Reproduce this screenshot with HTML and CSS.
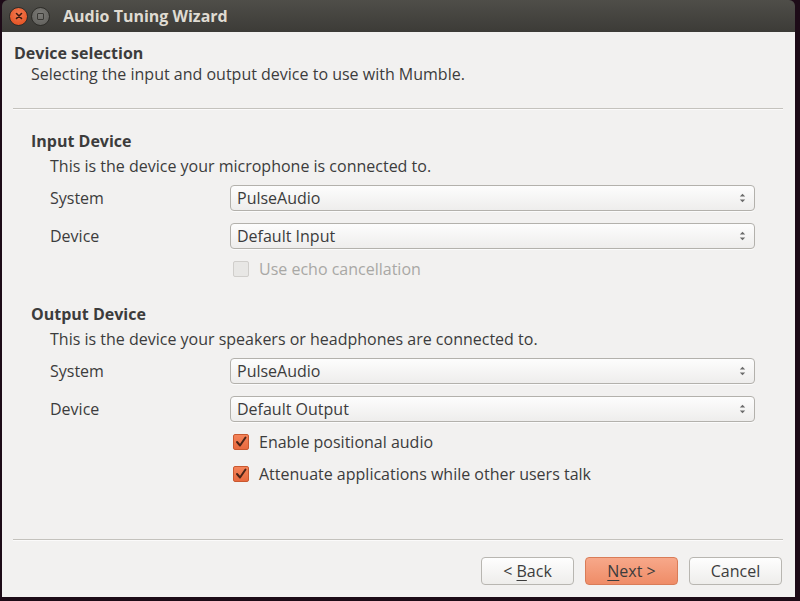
FILE: index.html
```html
<!DOCTYPE html>
<html>
<head>
<meta charset="utf-8">
<link rel="stylesheet" href="styles.css">
</head>
<body>
<div class="window">
  <div class="titlebar">
    <span class="btn-close"><svg width="10" height="10" viewBox="0 0 10 10"><path d="M2.5 2.5 L7.5 7.5 M7.5 2.5 L2.5 7.5" stroke="#3a1a10" stroke-width="1.6" stroke-linecap="round"/></svg></span>
    <span class="btn-min"><span class="min-sq"></span></span>
    <span class="title">Audio Tuning Wizard</span>
  </div>
  <div class="content">
    <div class="page-head">
      <div class="page-title">Device selection</div>
      <div class="page-sub">Selecting the input and output device to use with Mumble.</div>
    </div>
    <div class="sep"></div>

    <div class="group">
      <div class="group-title">Input Device</div>
      <div class="group-desc">This is the device your microphone is connected to.</div>
      <div class="form form-in">
        <div class="label">System</div>
        <div class="combo"><span>PulseAudio</span><span class="arrows"><svg width="7" height="12" viewBox="0 0 7 12"><path d="M0.8 4.5 L3.5 1.8 L6.2 4.5 Z M0.8 7.5 L3.5 10.2 L6.2 7.5 Z" fill="#6a6a6a"/></svg></span></div>
        <div class="label">Device</div>
        <div class="combo"><span>Default Input</span><span class="arrows"><svg width="7" height="12" viewBox="0 0 7 12"><path d="M0.8 4.5 L3.5 1.8 L6.2 4.5 Z M0.8 7.5 L3.5 10.2 L6.2 7.5 Z" fill="#6a6a6a"/></svg></span></div>
        <div class="label"></div>
        <div class="check disabled first"><span class="box"></span><span>Use echo cancellation</span></div>
      </div>
    </div>

    <div class="group group2">
      <div class="group-title">Output Device</div>
      <div class="group-desc">This is the device your speakers or headphones are connected to.</div>
      <div class="form form-out">
        <div class="label">System</div>
        <div class="combo"><span>PulseAudio</span><span class="arrows"><svg width="7" height="12" viewBox="0 0 7 12"><path d="M0.8 4.5 L3.5 1.8 L6.2 4.5 Z M0.8 7.5 L3.5 10.2 L6.2 7.5 Z" fill="#6a6a6a"/></svg></span></div>
        <div class="label">Device</div>
        <div class="combo"><span>Default Output</span><span class="arrows"><svg width="7" height="12" viewBox="0 0 7 12"><path d="M0.8 4.5 L3.5 1.8 L6.2 4.5 Z M0.8 7.5 L3.5 10.2 L6.2 7.5 Z" fill="#6a6a6a"/></svg></span></div>
        <div class="label"></div>
        <div class="check first"><span class="box checked"><svg width="14" height="14" viewBox="0 0 14 14"><path d="M3 7 L6 10.5 L11.5 2.5" stroke="#4a2418" stroke-width="2" fill="none" stroke-linecap="round" stroke-linejoin="round"/></svg></span><span>Enable positional audio</span></div>
        <div class="label"></div>
        <div class="check"><span class="box checked"><svg width="14" height="14" viewBox="0 0 14 14"><path d="M3 7 L6 10.5 L11.5 2.5" stroke="#4a2418" stroke-width="2" fill="none" stroke-linecap="round" stroke-linejoin="round"/></svg></span><span>Attenuate applications while other users talk</span></div>
      </div>
    </div>

    <div class="spacer"></div>
    <div class="sep"></div>
    <div class="buttons">
      <button class="btn">&lt; <u>B</u>ack</button>
      <button class="btn primary"><u>N</u>ext &gt;</button>
      <button class="btn">Cancel</button>
    </div>
  </div>
</div>
</body>
</html>
```

FILE: styles.css
```css
html, body {
  margin: 0;
  padding: 0;
  height: 601px;
  overflow: hidden;
}
body {
  background: #1d0b17;
  font-family: "Open Sans", "DejaVu Sans", sans-serif;
  font-size: 16px;
  color: #3c3c3c;
}
.window {
  margin-left: 2px;
  width: 793px;
  height: 597px;
  display: flex;
  flex-direction: column;
}
.titlebar {
  height: 32px;
  flex: none;
  background: linear-gradient(#4f4e49, #3c3b37);
  border-radius: 6px 6px 0 0;
  display: flex;
  align-items: center;
  padding-left: 7px;
  box-sizing: border-box;
}
.btn-close {
  width: 19px;
  height: 19px;
  border-radius: 50%;
  background: radial-gradient(circle at 50% 35%, #f47a50, #df4a1a);
  border: 1px solid #2d2c28;
  display: flex;
  align-items: center;
  justify-content: center;
  box-sizing: border-box;
}
.btn-min {
  width: 19px;
  height: 19px;
  border-radius: 50%;
  background: radial-gradient(circle at 50% 35%, #7c7b77, #5d5c58);
  border: 1px solid #2d2c28;
  margin-left: 3px;
  display: flex;
  align-items: center;
  justify-content: center;
  box-sizing: border-box;
}
.min-sq {
  width: 7px;
  height: 7px;
  border: 1.5px solid #3a3935;
  border-radius: 1px;
  box-sizing: border-box;
}
.title {
  margin-left: 13px;
  color: #dfdbd2;
  font-weight: bold;
  font-size: 16px;
}
.content {
  flex: 1;
  background: #f2f1f0;
  display: flex;
  flex-direction: column;
  padding: 0 12px 0 11px;
}
.page-head {
  padding-top: 11px;
  height: 76px;
  box-sizing: border-box;
}
.page-title {
  font-weight: bold;
  line-height: 20px;
  padding-left: 1px;
}
.page-sub {
  padding-left: 18px;
  line-height: 22px;
}
.sep {
  height: 1px;
  background: #c4c2bd;
  border-bottom: 1px solid #fbfafa;
  flex: none;
}
.group {
  padding-left: 18px;
  padding-top: 20px;
}
.group2 {
  padding-top: 24px;
}
.group-title {
  font-weight: bold;
  line-height: 22px;
}
.group-desc {
  padding-left: 19px;
  line-height: 22px;
  margin-top: 3px;
}
.form {
  display: grid;
  grid-template-columns: 180px 525px;
  row-gap: 12px;
  padding-left: 19px;
  margin-top: 8px;
  align-items: center;
}
.form-out {
  margin-top: 8px;
}
.label {
  line-height: 26px;
}
.combo {
  height: 26px;
  box-sizing: border-box;
  border: 1px solid #b3b1ac;
  border-radius: 4px;
  background: linear-gradient(#fdfdfd, #eeedec);
  display: flex;
  align-items: center;
  justify-content: space-between;
  padding: 0 8px 0 6px;
  box-shadow: 0 1px 0 rgba(255,255,255,0.7);
}
.arrows {
  display: flex;
  align-items: center;
}
.check {
  display: flex;
  align-items: center;
  height: 20px;
  padding-left: 3px;
}
.check.first {
  margin-top: -2px;
}
.box {
  width: 16px;
  height: 16px;
  box-sizing: border-box;
  border-radius: 2px;
  margin-right: 10px;
  border: 1px solid #c8c6c2;
  background: #e6e5e3;
  display: flex;
  align-items: center;
  justify-content: center;
}
.box.checked {
  background: linear-gradient(#f4845a, #e8693e);
  border: 1px solid #c9582f;
}
.check.disabled {
  color: #a9a8a5;
}
.check.disabled .box {
  background: #e8e7e5;
  border-color: #d0cecb;
}
.spacer {
  flex: 1;
}
.buttons {
  display: flex;
  justify-content: flex-end;
  gap: 11px;
  padding: 16px 1px 12px 0;
}
.btn {
  width: 93px;
  height: 28px;
  font-family: inherit;
  font-size: 16px;
  color: #3c3c3c;
  border: 1px solid #b8b6b1;
  border-radius: 4px;
  background: linear-gradient(#fefefe, #eeedeb);
  padding: 0;
}
.btn.primary {
  background: linear-gradient(#f7a88a, #ef8c67);
  border-color: #d97c58;
}
u {
  text-underline-offset: 3px;
}
```
